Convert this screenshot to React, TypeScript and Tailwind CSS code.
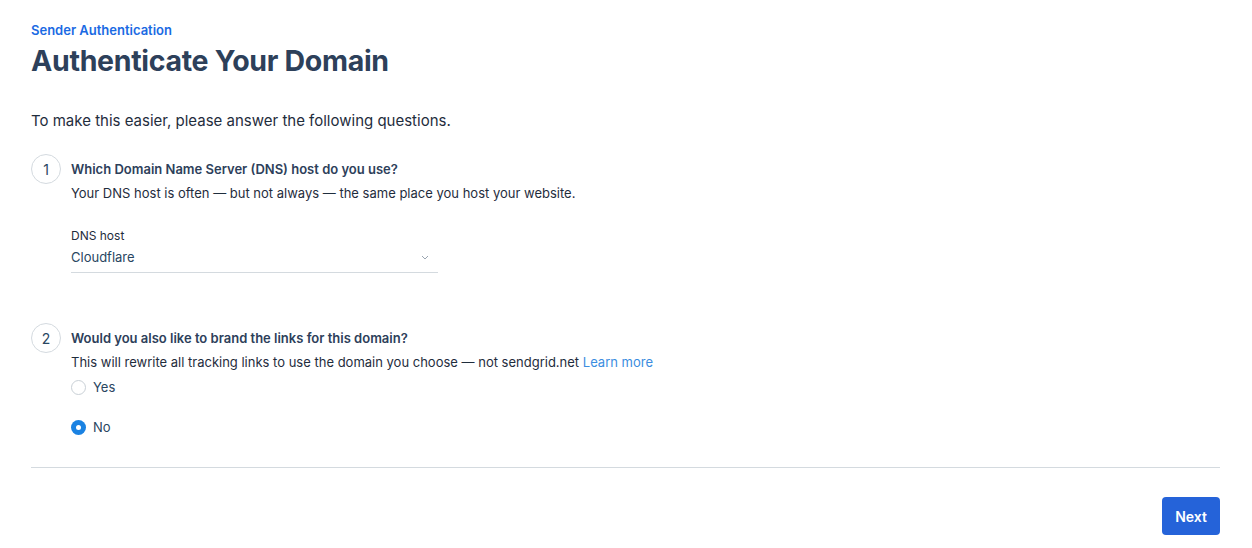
import { useState } from "react";

function StepBadge({ n }: { n: number }) {
  return (
    <div className="flex h-[30px] w-[30px] shrink-0 items-center justify-center rounded-full border border-[#d4dadf] text-[14px] text-[#294661]">
      {n}
    </div>
  );
}

function Radio({ checked, label, onClick }: { checked: boolean; label: string; onClick: () => void }) {
  return (
    <button onClick={onClick} className="flex items-center gap-[7px] text-[13px] text-[#294661]">
      {checked ? (
        <span className="flex h-[15px] w-[15px] items-center justify-center rounded-full bg-[#1a82e2]">
          <span className="h-[5px] w-[5px] rounded-full bg-white" />
        </span>
      ) : (
        <span className="h-[15px] w-[15px] rounded-full border border-[#c9d0d6] bg-white" />
      )}
      {label}
    </button>
  );
}

export default function App() {
  const [brand, setBrand] = useState<"yes" | "no">("no");

  return (
    <div className="min-h-[548px] bg-white pl-[31px] pr-[32px] pt-[22px] font-['Inter','Noto_Sans',sans-serif] text-[#294661]">
      <p className="text-[13px] font-semibold leading-[16px] text-[#1a6ae3]">Sender Authentication</p>
      <h1 className="mt-[5px] text-[28.5px] font-bold leading-[36px] tracking-[-0.3px] text-[#2d405a]">
        Authenticate Your Domain
      </h1>

      <p className="mt-[32px] text-[15px] leading-[20px] text-[#1f2d3d]">
        To make this easier, please answer the following questions.
      </p>

      <div className="mt-[23px] flex gap-[10px]">
        <StepBadge n={1} />
        <div className="pt-[6px]">
          <p className="text-[13px] font-semibold leading-[18px] text-[#2d405a]">
            Which Domain Name Server (DNS) host do you use?
          </p>
          <p className="mt-[6px] text-[13px] leading-[18px] text-[#1f2d3d]">
            Your DNS host is often — but not always — the same place you host your website.
          </p>
          <div className="mt-[26px] w-[367px]">
            <label className="block text-[12px] leading-[16px] text-[#1f2d3d]">DNS host</label>
            <div className="mt-[4px] flex items-center justify-between border-b border-[#d4dadf] pb-[6px]">
              <span className="text-[13px] leading-[18px] text-[#294661]">Cloudflare</span>
              <svg width="8" height="5" viewBox="0 0 8 5" className="mr-[9px]" fill="none">
                <path d="M1 1l3 3 3-3" stroke="#9aa5b1" strokeWidth="1" />
              </svg>
            </div>
          </div>
        </div>
      </div>

      <div className="mt-[50px] flex gap-[10px]">
        <StepBadge n={2} />
        <div className="pt-[6px]">
          <p className="text-[13px] font-semibold leading-[18px] text-[#2d405a]">
            Would you also like to brand the links for this domain?
          </p>
          <p className="mt-[6px] text-[13px] leading-[18px] text-[#1f2d3d]">
            This will rewrite all tracking links to use the domain you choose — not sendgrid.net{" "}
            <a className="text-[#3b8de0]" href="#">Learn more</a>
          </p>
          <div className="mt-[7px] flex flex-col items-start gap-[20px]">
            <Radio checked={brand === "yes"} label="Yes" onClick={() => setBrand("yes")} />
            <Radio checked={brand === "no"} label="No" onClick={() => setBrand("no")} />
          </div>
        </div>
      </div>

      <div className="mt-[30px] border-t border-[#d4dadf]" />

      <div className="mt-[29px] flex justify-end">
        <button className="h-[38px] w-[58px] rounded-[4px] bg-[#2563d9] text-[14px] font-semibold text-white">
          Next
        </button>
      </div>
    </div>
  );
}
